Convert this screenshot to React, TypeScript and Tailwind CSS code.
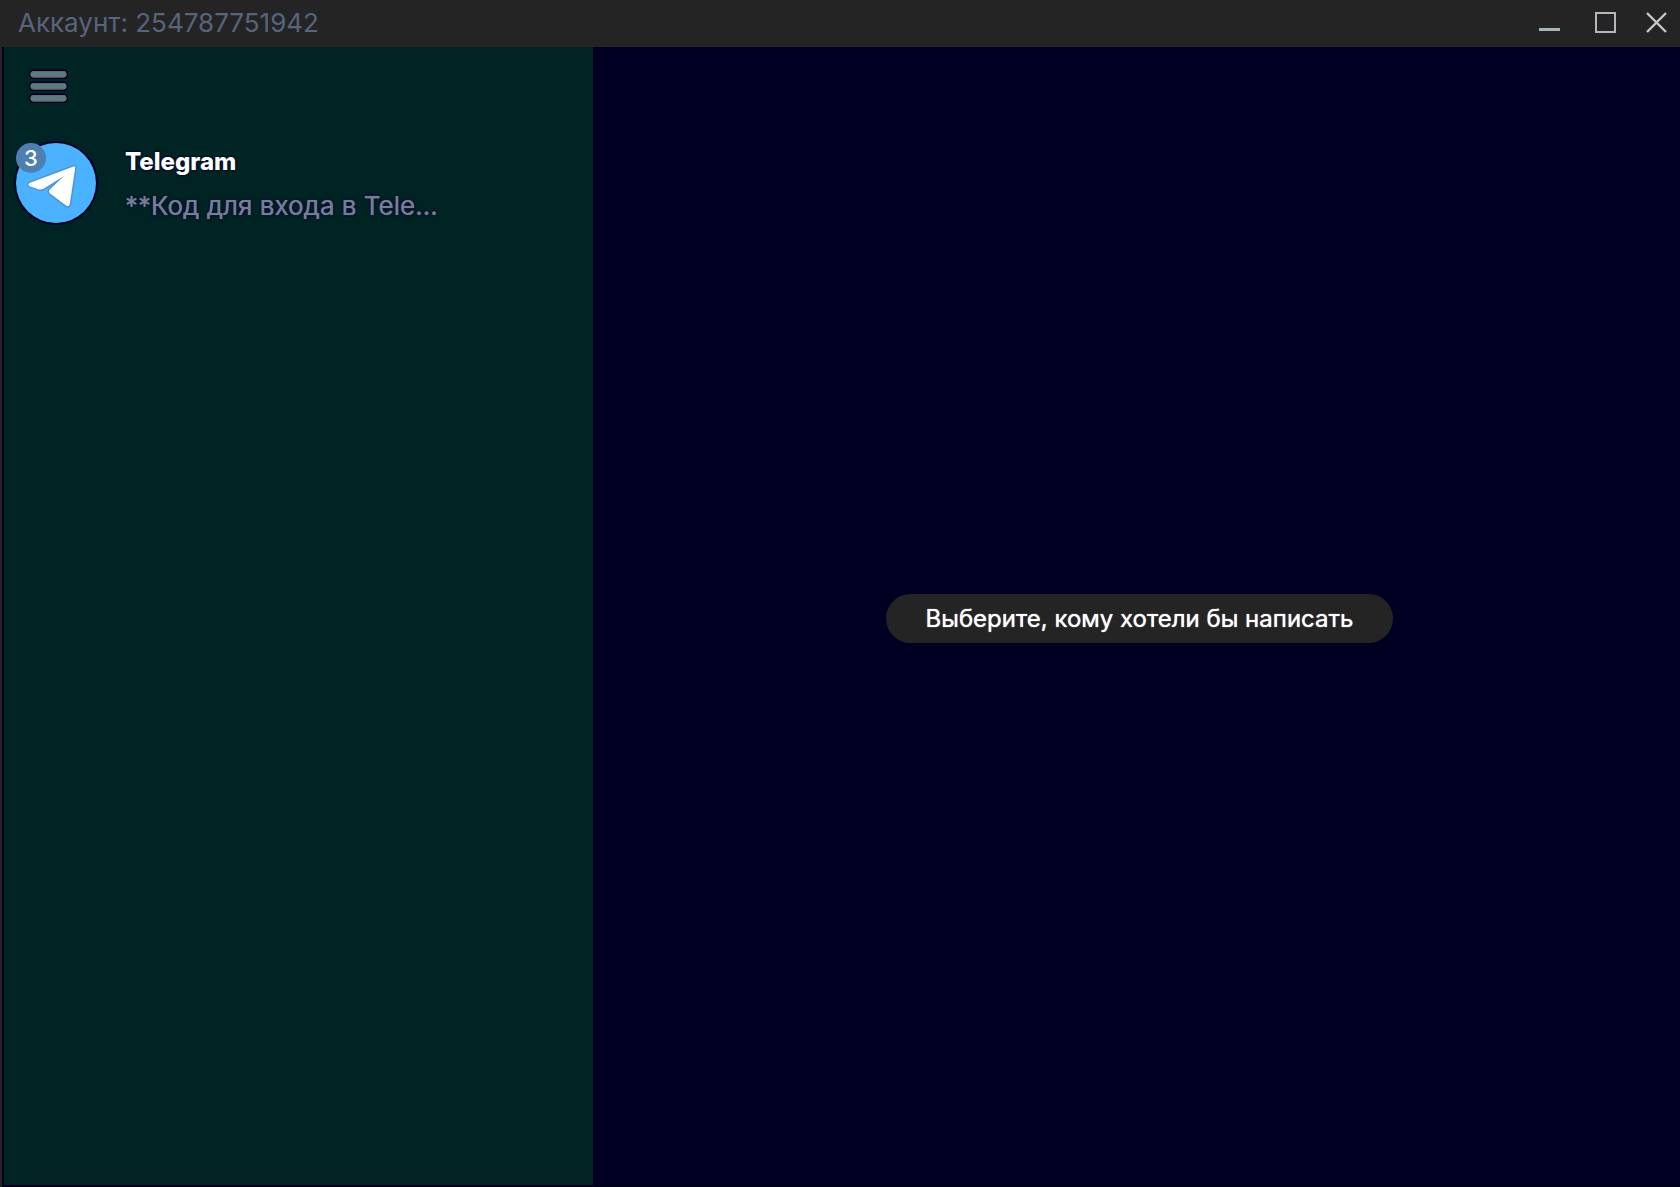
import { useState } from 'react';

const chats = [
  { id: 1, name: 'Telegram', preview: '**Код для входа в Tele...', unread: 3 },
];

function TelegramLogo() {
  return (
    <svg viewBox="0 0 80 80" className="h-20 w-20 overflow-visible" aria-hidden="true">
      <circle cx="40" cy="40" r="40" fill="#4bb2ff" stroke="#000026" strokeWidth="4" paintOrder="stroke" />
      <path
        d="M57.5 23.5 Q59.5 22.8 59.2 25 L53.8 61 Q53 64.5 50 62.6 L34 50.5 Q32 48.5 33.8 46.6 L48 33 L27.5 45.8 Q25.5 46.6 23 46.4 L14 43.4 Q10.5 41.6 14 39.8 Z"
        fill="#fff"
        stroke="#4d92dc"
        strokeWidth="3"
        paintOrder="stroke"
        strokeLinejoin="round"
      />
    </svg>
  );
}

function TitleBar() {
  return (
    <header className="flex h-[47px] items-center justify-between bg-[#242424] pb-0.5 pl-4 pr-3">
      <h1 className="text-[26px] leading-8 text-[#57647c]">Аккаунт: 254787751942</h1>
      <div className="flex items-center gap-8">
        <button type="button" aria-label="Свернуть" className="h-[22px] w-[22px]">
          <svg viewBox="0 0 22 22" className="h-[22px] w-[22px]">
            <rect x="1" y="16" width="21" height="3" fill="#a9b4b8" />
          </svg>
        </button>
        <button type="button" aria-label="Развернуть" className="h-[22px] w-[22px]">
          <svg viewBox="0 0 22 22" className="h-[22px] w-[22px] overflow-visible">
            <rect x="4" y="1" width="19" height="19" fill="none" stroke="#b5b5bd" strokeWidth="2" />
          </svg>
        </button>
        <button type="button" aria-label="Закрыть" className="h-[22px] w-[22px]">
          <svg viewBox="0 0 22 22" className="h-[22px] w-[22px]">
            <path d="M1 1 L20 20 M20 1 L1 20" stroke="#c8c8c8" strokeWidth="2.4" />
          </svg>
        </button>
      </div>
    </header>
  );
}

export default function App() {
  const [selected, setSelected] = useState<number | null>(null);

  return (
    <div className="flex min-h-screen flex-col border-l-2 border-[#242424] bg-[#000022] font-['Inter',sans-serif]">
      <TitleBar />
      <div className="flex grow border-b-2 border-l-2 border-[#00001c]">
        <aside className="w-[589px] shrink-0 bg-[#002424]">
          <button type="button" aria-label="Меню" className="ml-6 mt-5 block">
            <svg viewBox="0 0 40 40" className="h-10 w-10">
              <g fill="#5b7b7e" stroke="#000024" strokeWidth="3" paintOrder="stroke">
                <rect x="2.5" y="4" width="36" height="6.5" rx="3" />
                <rect x="2.5" y="16" width="36" height="6.5" rx="3" />
                <rect x="2.5" y="28" width="36" height="6.5" rx="3" />
              </g>
              <g fill="none" stroke="#6c6672" strokeWidth="1">
                <rect x="3" y="4.5" width="35" height="5.5" rx="2.5" />
                <rect x="3" y="16.5" width="35" height="5.5" rx="2.5" />
                <rect x="3" y="28.5" width="35" height="5.5" rx="2.5" />
              </g>
            </svg>
          </button>
          <ul className="mt-9">
            {chats.map((chat) => (
              <li key={chat.id}>
                <button
                  type="button"
                  onClick={() => setSelected(chat.id)}
                  aria-pressed={selected === chat.id}
                  className="flex w-full gap-[29px] pl-3 text-left"
                >
                  <span className="relative h-20 w-20 shrink-0">
                    <TelegramLogo />
                    <span className="absolute left-0 top-0 flex h-[30px] w-[30px] items-center justify-center rounded-full bg-[#4d7fb2] text-[22px] font-medium leading-[30px] text-white">
                      {chat.unread}
                    </span>
                  </span>
                  <span className="flex flex-col gap-3 pt-[3px]">
                    <span className="text-2xl font-extrabold text-white [text-shadow:0_0_2px_#000026,0_0_3px_#000026]">
                      {chat.name}
                    </span>
                    <span className="text-[26px] leading-8 text-[#747e96] [text-shadow:0_0_1px_#747e96,0_0_3px_#000026,0_0_3px_#000026]">
                      {chat.preview}
                    </span>
                  </span>
                </button>
              </li>
            ))}
          </ul>
        </aside>
        <main className="flex grow items-center justify-center bg-[#000022] pl-1.5 pt-1">
          <p className="rounded-full bg-[#242424] px-10 pb-2 pt-[9px] text-2xl text-white [text-shadow:0_0_1px_#ffffff]">
            Выберите, кому хотели бы написать
          </p>
        </main>
      </div>
    </div>
  );
}
